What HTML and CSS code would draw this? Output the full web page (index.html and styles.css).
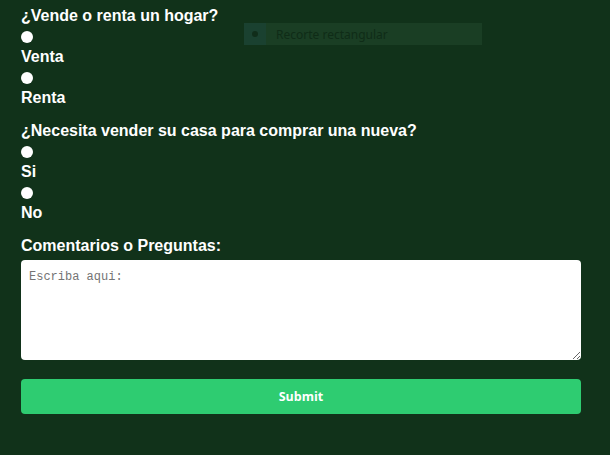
FILE: index.html
```html
<!DOCTYPE html>
<html lang="es">
<head>
<meta charset="utf-8">
<link rel="stylesheet" href="styles.css">
</head>
<body>
<form class="form">
  <div class="q q-first">¿Vende o renta un hogar?</div>
  <span class="radio"></span>
  <div class="opt">Venta</div>
  <span class="radio"></span>
  <div class="opt">Renta</div>

  <div class="q">¿Necesita vender su casa para comprar una nueva?</div>
  <span class="radio"></span>
  <div class="opt">Si</div>
  <span class="radio"></span>
  <div class="opt">No</div>

  <div class="q">Comentarios o Preguntas:</div>
  <textarea class="comments" placeholder="Escriba aqui:"></textarea>
  <button type="button" class="submit">Submit</button>
</form>
<div class="snip">
  <span class="snip-icon"><span class="snip-dot"></span></span>
  <span class="snip-text">Recorte rectangular</span>
</div>
</body>
</html>
```

FILE: styles.css
```css
html, body {
  margin: 0;
  padding: 0;
  background: #11321a;
  height: 100%;
}
body {
  font-family: "Liberation Sans", Arial, sans-serif;
  color: #ffffff;
  position: relative;
}
.form {
  display: flex;
  flex-direction: column;
  align-items: flex-start;
  width: 560px;
  margin-left: 21px;
  padding-top: 7px;
}
.q {
  font-weight: bold;
  font-size: 16px;
  line-height: 18px;
  margin-top: 15px;
}
.q-first {
  margin-top: 0;
}
.radio {
  display: block;
  width: 12px;
  height: 12px;
  border-radius: 50%;
  background: #ffffff;
  margin-top: 6px;
  margin-bottom: 5px;
}
.opt {
  font-weight: bold;
  font-size: 16px;
  line-height: 18px;
}
.comments {
  box-sizing: border-box;
  width: 560px;
  height: 100px;
  margin-top: 5px;
  border: none;
  border-radius: 4px;
  padding: 10px 8px;
  font-family: "Liberation Mono", "DejaVu Sans Mono", monospace;
  font-size: 12px;
  background: #ffffff;
  color: #222;
}
.comments::placeholder {
  color: #747474;
}
.submit {
  width: 560px;
  height: 35px;
  margin-top: 19px;
  border: none;
  border-radius: 4px;
  background: #2ecc71;
  color: #ffffff;
  font-family: "Open Sans", "Noto Sans", sans-serif;
  font-weight: bold;
  font-size: 12.5px;
}
.snip {
  position: absolute;
  left: 244px;
  top: 23px;
  width: 238px;
  height: 22px;
  display: flex;
  align-items: center;
  background: #1a3e24;
}
.snip-icon {
  width: 22px;
  height: 22px;
  background: #1a4130;
  display: flex;
  align-items: center;
  justify-content: center;
}
.snip-dot {
  width: 6px;
  height: 6px;
  border-radius: 50%;
  background: #102d1a;
}
.snip-text {
  margin-left: 10px;
  font-family: "Noto Sans", "Open Sans", sans-serif;
  font-size: 12px;
  color: #0f2c17;
}
```
